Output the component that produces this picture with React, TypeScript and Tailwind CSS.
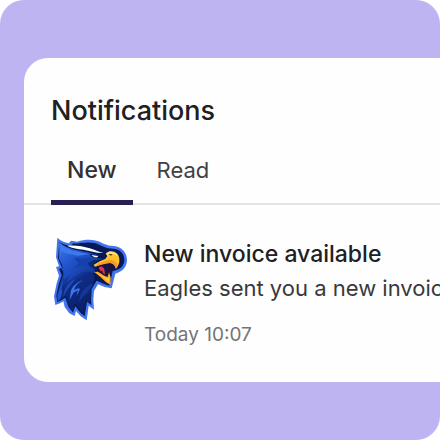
import { useState } from "react";

type Notification = {
  id: number;
  title: string;
  message: string;
  time: string;
};

const notifications: Notification[] = [
  {
    id: 1,
    title: "New invoice available",
    message: "Eagles sent you a new invoice",
    time: "Today 10:07",
  },
];

const tabs = ["New", "Read"];

function EagleLogo() {
  return (
    <svg
      viewBox="0 0 252 276"
      className="h-[92px] w-[84px] shrink-0"
      role="img"
      aria-label="Eagles"
    >
      <defs>
        <linearGradient id="eagle-neck" x1="0.2" y1="0" x2="0.6" y2="1">
          <stop offset="0.2" stopColor="#1a49bd" />
          <stop offset="0.45" stopColor="#0e2c86" />
          <stop offset="1" stopColor="#0a1e68" />
        </linearGradient>
        <linearGradient id="eagle-head" x1="0" y1="0" x2="0.9" y2="0.9">
          <stop offset="0" stopColor="#3b78ee" />
          <stop offset="0.45" stopColor="#1f52c8" />
          <stop offset="1" stopColor="#0f2e88" />
        </linearGradient>
      </defs>
      {/* Outline */}
      <path
        d="M28 14 C39 24 50 28 62 31 L69 23 L88 26 C112 18 141 19 158 28 C174 36 182 39 198 39 C221 41 237 59 237 81 C237 98 227 111 213 118 L202 122 L191 166 L170 162 L150 154 L138 174 L136 200 L138 230 L122 218 L116 262 L98 250 L84 234 L80 249 L64 241 L50 222 L46 205 L36 211 L22 216 L18 190 L26 151 L33 128 L24 102 L33 100 L24 73 Z"
        fill="#4376ee"
      />
      <path
        d="M34 27 C44 34 56 37 68 38 L76 31 L93 34 C115 26 139 27 154 35 C171 44 182 46 196 47 C216 48 229 62 229 80 C229 95 220 106 206 111 L194 115 L184 158 L170 154 L146 143 L131 168 L129 200 L130 216 L117 206 L110 250 L98 240 L82 220 L75 239 L61 221 L52 194 L40 202 L28 207 L25 188 L32 154 L41 126 L33 107 L42 105 L30 76 Z"
        fill="#08195a"
      />
      {/* Neck */}
      <path
        d="M40 80 L120 82 L140 136 L128 166 L126 209 L114 200 L108 243 L96 230 L82 211 L74 234 L62 215 L54 188 L30 204 L29 184 L36 152 L46 124 Z"
        fill="url(#eagle-neck)"
      />
      <path d="M29 204 L28 186 L38 158 L47 139 L40 168 L43 178 L37 197 Z" fill="#2455c6" />
      <path
        d="M106 141 C88 147 75 158 69 172 L65 201 L76 180 L89 171 L86 188 L96 168 L91 166 L77 171 C82 158 91 149 106 141 Z"
        fill="#3f75ea"
      />
      <path d="M84 136 C68 143 58 154 49 174 L45 193 L58 170 Z" fill="#1c49b4" />
      <path d="M137 151 C120 157 105 168 97 185 L93 206 L107 188 L119 178 Z" fill="#133794" />
      {/* Head */}
      <path
        d="M34 28 C58 50 96 53 126 59 L156 68 L166 78 L139 82 L126 94 L140 106 L142 122 L123 115 L103 116 L78 132 L57 148 L65 125 L47 139 L50 117 L38 107 L47 106 L33 77 Z"
        fill="url(#eagle-head)"
      />
      <path d="M34 31 C58 55 96 57 126 64 L90 68 L54 61 L39 54 L38 74 Z" fill="#3e79ed" />
      <path
        d="M77 75 C96 76 115 77 131 77 L120 89 L127 103 C108 96 94 98 78 107 L92 90 Z"
        fill="#1641ab"
      />
      <path d="M137 80 L151 82 L136 93 L142 111 L127 101 L119 91 Z" fill="#0c2777" />
      {/* White crest */}
      <path
        d="M57 38 C82 36 105 39 125 46 C142 51 151 57 166 60 C145 61 127 53 107 50 C89 48 74 46 57 38 Z"
        fill="#ffffff"
      />
      <path
        d="M81 31 C110 27 134 30 151 41 C169 52 187 49 203 53 C217 57 225 66 223 81 C221 91 216 98 209 103 L212 83 C214 66 198 57 179 57 C156 60 143 45 123 39 C108 33 96 34 81 31 Z"
        fill="#07195a"
      />
      {/* Eye */}
      <path d="M125 63 L159 69 L168 77 L149 76 L131 71 Z" fill="#06143f" />
      <path d="M130 66 L151 69 L148 73 C141 74 135 71 130 66 Z" fill="#f4f8ff" />
      {/* Open mouth */}
      <path
        d="M143 91 L173 83 L199 92 L202 105 L191 111 L184 144 L166 137 L142 122 L151 105 Z"
        fill="#1a1243"
      />
      <path
        d="M152 105 C158 97 165 101 169 108 L171 125 L164 119 L163 113 L158 115 Z"
        fill="#e23350"
      />
      {/* Beak */}
      <path
        d="M181 56 C197 51 212 60 214 77 C216 89 210 99 204 107 C201 95 193 90 185 90 L169 91 L156 96 L141 101 L137 95 L157 84 L172 78 L178 69 L173 61 Z"
        fill="#ffc12c"
      />
      <path d="M182 57 C195 54 207 59 210 70 C199 62 190 62 181 68 L174 64 Z" fill="#ffe27a" />
      <path
        d="M173 83 C190 78 207 83 208 96 L204 107 C200 96 194 91 185 90 L156 96 L142 101 L151 92 Z"
        fill="#f49b20"
      />
      <path d="M180 63 L194 63 L189 68 Z" fill="#523a22" />
      <path
        d="M139 117 L150 116 L169 128 L179 132 L183 118 L188 134 L187 155 L174 148 L160 134 Z"
        fill="#fda824"
      />
      <path d="M148 120 L166 131 L180 138 L184 127 L183 147 L170 138 Z" fill="#ffd53d" />
    </svg>
  );
}

export default function App() {
  const [activeTab, setActiveTab] = useState("New");

  return (
    <div className="min-h-screen bg-white font-['Inter',sans-serif]">
      <main className="flex min-h-screen items-center overflow-hidden rounded-3xl bg-[#bdb4f1] pl-6">
        <section className="min-w-0 flex-1 overflow-hidden rounded-l-3xl bg-[#fefefe] pt-[35px] pb-[33px]">
          <h1 className="px-[27px] text-[27px] leading-9 font-medium text-[#202022]">
            Notifications
          </h1>

          {/* Tabs */}
          <div
            role="tablist"
            className="mt-[25px] flex gap-2 border-b-2 border-[#e4e3e6] px-[27px]"
          >
            {tabs.map((tab) => (
              <button
                key={tab}
                type="button"
                role="tab"
                aria-selected={activeTab === tab}
                onClick={() => setActiveTab(tab)}
                className={
                  activeTab === tab
                    ? "-mb-0.5 border-b-[5px] border-[#282052] px-4 pb-3.5 text-[23px] leading-8 font-medium text-[#323234]"
                    : "-mb-0.5 border-b-[5px] border-transparent px-4 pb-3.5 text-[22px] leading-8 text-[#414143]"
                }
              >
                {tab}
              </button>
            ))}
          </div>

          {/* Notification list */}
          <ul>
            {notifications.map((item) => (
              <li key={item.id} className="flex gap-3 pt-7 pl-6">
                <EagleLogo />
                <div className="pt-1 whitespace-nowrap">
                  <h2 className="text-[23px] leading-[34px] font-medium text-[#202022]">
                    {item.title}
                  </h2>
                  <p className="text-[22px] leading-[34px] text-[#39393b]">
                    {item.message}
                  </p>
                  <time className="mt-4 block text-[19px] leading-7 text-[#747476]">
                    {item.time}
                  </time>
                </div>
              </li>
            ))}
          </ul>
        </section>
      </main>
    </div>
  );
}
